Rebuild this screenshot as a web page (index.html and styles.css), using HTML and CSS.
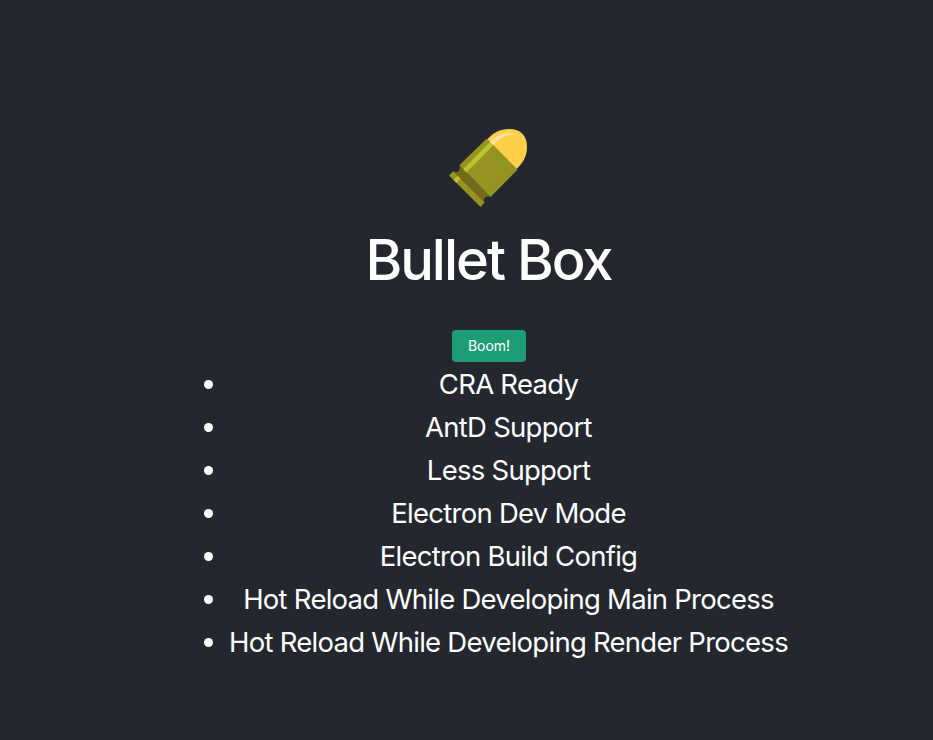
FILE: index.html
```html
<!DOCTYPE html>
<html lang="en">
<head>
<meta charset="utf-8">
<title>Bullet Box</title>
<link rel="stylesheet" href="styles.css">
</head>
<body>
<main class="app">
<svg class="logo" viewBox="0 0 78 78" aria-hidden="true">
<path fill="#ffcf48" d="M38.2 10.5C44 4 51 0 60 0C72 0 78 7 78 18C78 27 74 34 67.5 40Z"/>
<path fill="#746b19" d="M10.3 36.5L41.7 68C38 66.5 35 68 35 71.5L35.3 73.3L4.3 42.3C8.5 44.5 12 42 10.3 36.5Z"/>
<path fill="#959321" d="M10.3 36.2L37.7 9.5L68.5 40.8L41.5 68Z"/>
<path fill="#bcc42d" d="M14.2 40.2L41 13L44.2 16.2L17.4 43.4Z"/>
<path fill="#ffe3a0" d="M41 13C49 5 58 2 67.5 5.5C59 5 52 8 44.2 16.2Z"/>
<path fill="#959321" d="M0 46.6L4.3 42.2L35.6 73.5L31.5 78Z"/>
<path fill="#bcc42d" d="M4.4 51L8.7 46.7L11.7 49.7L7.5 54.1Z"/>
</svg>
<h1 class="title">Bullet Box</h1>
<button class="button" type="button">Boom!</button>
<ul class="features">
<li>CRA Ready</li>
<li>AntD Support</li>
<li>Less Support</li>
<li>Electron Dev Mode</li>
<li>Electron Build Config</li>
<li>Hot Reload While Developing Main Process</li>
<li>Hot Reload While Developing Render Process</li>
</ul>
</main>
</body>
</html>
```
FILE: styles.css
```css
body { margin: 0; height: 740px; overflow: hidden; background: #25272f; color: #fff; font-family: Inter, sans-serif; }
.app { display: flex; flex-direction: column; align-items: center; padding: 129px 0 0 44px; }
.logo { width: 78px; height: 78px; display: block; margin-right: 1px; }
.title { margin: 20px 0 36px; font-size: 56px; line-height: 67px; font-weight: 500; letter-spacing: -2px; }
.button { width: 74px; height: 32px; padding: 0 0 2px 1px; border: 0; border-radius: 4px; background: #1d9d74; box-shadow: 0 2px 0 rgba(0, 0, 0, .045); color: #fff; font: 14px Inter, sans-serif; }
.features { margin: 1px 0 0; padding: 0 0 0 40px; font-size: 27.5px; line-height: 43px; text-align: center; letter-spacing: -.74px; }
```
